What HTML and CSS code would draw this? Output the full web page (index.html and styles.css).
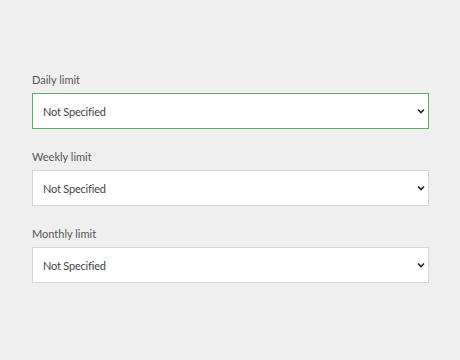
FILE: index.html
```html
<!DOCTYPE html>
<html>
<head>
<meta charset="utf-8">
<link rel="stylesheet" href="styles.css">
</head>
<body>
<div class="form">
  <div class="field">
    <label class="label">Daily limit</label>
    <div class="select focused"><span>Not Specified</span><svg class="chev" width="8" height="6" viewBox="0 0 8 6"><path d="M1 1.5 L4 4.5 L7 1.5" fill="none" stroke="#222" stroke-width="1.6"/></svg></div>
  </div>
  <div class="field">
    <label class="label">Weekly limit</label>
    <div class="select"><span>Not Specified</span><svg class="chev" width="8" height="6" viewBox="0 0 8 6"><path d="M1 1.5 L4 4.5 L7 1.5" fill="none" stroke="#222" stroke-width="1.6"/></svg></div>
  </div>
  <div class="field">
    <label class="label">Monthly limit</label>
    <div class="select"><span>Not Specified</span><svg class="chev" width="8" height="6" viewBox="0 0 8 6"><path d="M1 1.5 L4 4.5 L7 1.5" fill="none" stroke="#222" stroke-width="1.6"/></svg></div>
  </div>
</div>
</body>
</html>
```
FILE: styles.css
```css
html, body { margin: 0; padding: 0; background: #efefef; }
body { font-family: Lato, "Open Sans", sans-serif; width: 460px; height: 360px; }
.form { padding: 72px 31px 0 32px; display: flex; flex-direction: column; gap: 20px; }
.field { display: flex; flex-direction: column; }
.label { font-size: 11px; line-height: 16px; color: #555; margin-bottom: 5px; }
.select { box-sizing: border-box; height: 36px; background: #fff; border: 1px solid #d6d6d6; display: flex; align-items: center; justify-content: space-between; padding: 0 2px 0 10px; font-size: 11px; letter-spacing: -0.2px; color: #444; }
.select.focused { border-color: #5aae6a; }
.chev { margin-right: 1px; }
```
